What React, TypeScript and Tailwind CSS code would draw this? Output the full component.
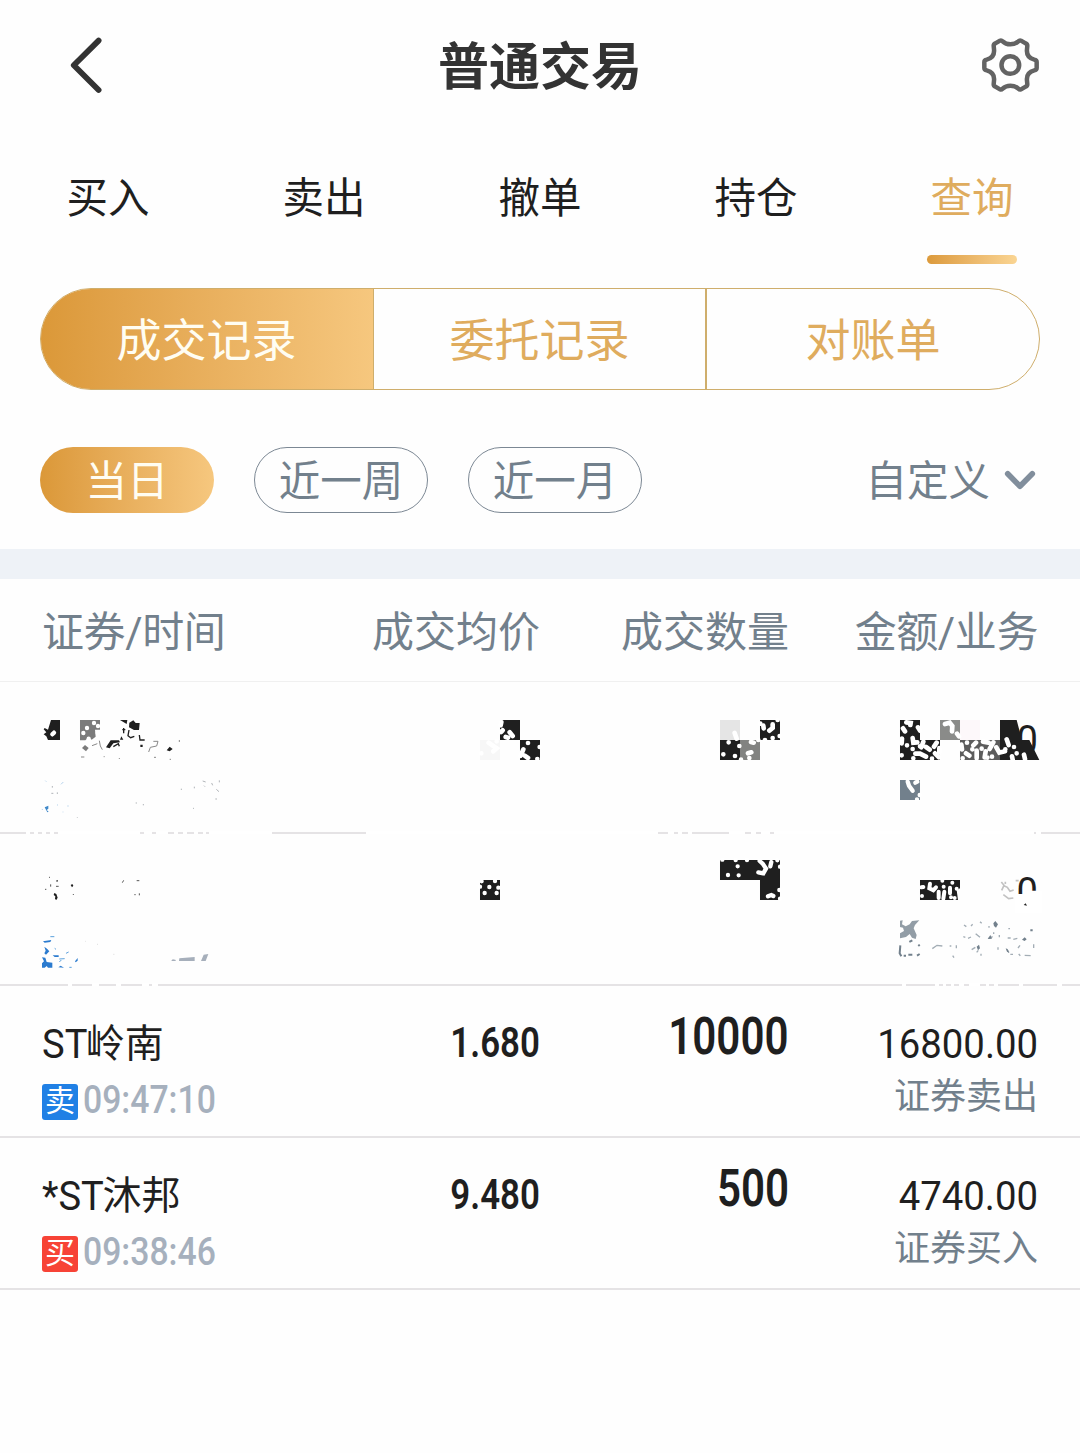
import { ReactNode } from 'react';

interface Trade {
  name: string;
  time: string;
  side: 'buy' | 'sell';
  price: string;
  amount: string;
  total: string;
  business: string;
}

const tabs = ['买入', '卖出', '撤单', '持仓', '查询'];
const segments = ['成交记录', '委托记录', '对账单'];
const ranges = ['当日', '近一周', '近一月'];
const columns = ['证券/时间', '成交均价', '成交数量', '金额/业务'];

const trades: Trade[] = [
  { name: 'ST岭南', time: '09:47:10', side: 'sell', price: '1.680', amount: '10000', total: '16800.00', business: '证券卖出' },
  { name: '*ST沐邦', time: '09:38:46', side: 'buy', price: '9.480', amount: '500', total: '4740.00', business: '证券买入' },
];

function BackIcon() {
  return (
    <svg className="w-9 h-15" viewBox="0 0 36 60" fill="none" stroke="#333333" strokeWidth="5.8" strokeLinecap="round" strokeLinejoin="round">
      <path d="M31.6 5.6L6.8 30.3L31.6 55" />
    </svg>
  );
}

function GearIcon() {
  return (
    <svg className="w-[60px] h-[60px]" viewBox="240 75 180 180" fill="none" stroke="#636363" strokeWidth="13.5" strokeLinejoin="round">
      <path d="M253 165V156Q253 150 260 149C276 145 284 136 282 118L281 107Q281 102 286 100L300 92Q304 90 308 94C320 106 342 106 355 94Q359 90 363 92L377 100Q382 102 382 107L381 118C379 136 387 145 403 149Q410 150 410 156V174Q410 180 403 181C387 185 379 194 381 212L382 223Q382 228 377 230L363 238Q359 240 355 236C342 224 320 224 308 236Q304 240 300 238L286 230Q281 228 281 223L282 212C284 194 276 185 260 181Q253 180 253 174Z" />
      <circle cx="331" cy="165" r="26.5" />
    </svg>
  );
}

function HiddenRow({ children, viewBox }: { children: ReactNode; viewBox: string }) {
  return (
    <div className="relative h-[152px] border-b-2 border-[#e5e3e5]">
      <div className="absolute right-[42px] top-[30px] h-[58px] flex items-center text-[41px] text-[#1f1f1f]">
        <span className="origin-right scale-x-[0.93]">0</span>
      </div>
      <svg className="absolute inset-x-0 top-0 w-[1080px] h-[152px]" viewBox={viewBox}>
        {children}
      </svg>
    </div>
  );
}

// 第一条记录（涂抹遮挡）
function HiddenFirst() {
  return (
    <HiddenRow viewBox="0 682 1080 152">
      {/* 名称 */}
      <g transform="translate(20 670) scale(0.33333)" fill="#1f1f1f">
        <path d="M93 150H120V210H84L79 199L71 193L79 187L71 178L74 174L84 179Z" />
        <path d="M180 150H240V179H225L227 200L215 209L206 202L196 211H180Z" fill="#7b7b7b" />
        <path d="M186 234L195 225L206 234L198 244Z" fill="#7b7b7b" />
        <path d="M300 150H322L320 162Z M328 158L340 151L347 159H359L357 180H342L327 172Z" />
        <path d="M300 209L304 199L310 209Z M272 211H297L300 217L280 220L269 235L258 232Z M361 224H368V231H361Z M440 241L449 230L458 237L449 244Z" />
        <path d="M327 180L324 197L332 203L343 199M358 195L360 210H374M311 174V190M307 179H316M280 230L295 221L298 229" fill="none" stroke="#1f1f1f" strokeWidth="4" />
        <path d="M216 227L232 221M238 212L241 228L247 239M386 246L391 232L410 228L414 214H400M183 261H193M251 260H254M402 262H408M449 268H453M298 264V267M478 210V216" fill="none" stroke="#888888" strokeWidth="3" />
        <path d="M222 159h0M201 174h0M190 189h0M206 206h0M234 168h0M233 189h0M97 193L102 188" fill="none" stroke="#ffffff" strokeWidth="13" strokeLinecap="round" />
        <path d="M74 412L85 407V416L80 420L86 425L82 427Z" fill="#3f88c9" />
        <path d="M76 332L79 335M123 343L130 336M67 420V417M128 426H130M111 405H114M144 406V410" fill="none" stroke="#8fbde2" strokeWidth="2" />
        <path d="M97 348V353M94 370H100M112 367V372M347 399H351M370 402V406M484 356V360M172 442V444M519 415H522M586 387H591M589 358L597 365M548 333L557 336M575 339L578 346M523 355V350M598 331V337M552 347L555 350" fill="none" stroke="#b0b4b8" strokeWidth="3" />
      </g>

      {/* 均价、数量 */}
      <g transform="translate(440 690) scale(0.33333)">
        <path d="M180 90H240V150H180Z M240 150H300V210H240Z M840 150H900V210H840Z M960 90H1020V150H960Z" fill="#1f1f1f" />
        <path d="M120 150H180V210H120Z" fill="#f7f7f7" />
        <path d="M840 90H900V150H840Z" fill="#e5e5e5" />
        <path d="M900 150H960V210H900Z" fill="#828381" />
        <path
          d="M184 96L182 106M188 121L183 126M209 127L218 138M197 141L204 143M264 159h0M250 178L245 190M241 198h0M254 197L264 204M292 207h0M299 171h0M146 158L154 164L170 175L160 184M124 190h0M170 154h0M884 129L890 146M866 157h0M850 193h0M885 198h0M898 168h0M933 156L941 158M924 190L934 187M928 204h0M903 209h0M955 150h0M970 107L971 115M998 103V114L988 122M961 101h0M1013 90h0M1019 138h0M998 144h0M975 150h0"
          fill="none"
          stroke="#ffffff"
          strokeWidth="14"
          strokeLinecap="round"
        />
      </g>

      {/* 金额 */}
      <g transform="translate(860 690) scale(0.33333)">
        <path d="M120 90H180V150H240V210H120Z M420 90H470L480 128V150H508L538 210H420Z" fill="#1f1f1f" />
        <path d="M240 90H300V150H240Z" fill="#8a8b89" />
        <path d="M300 90H360V150H300Z" fill="#fdf8fa" />
        <path d="M300 150H420V210H300Z" fill="#5c5c5c" />
        <path
          d="M139 97L152 99L151 105M129 115L135 124M174 112L180 122M158 144L160 158L172 157M126 146L125 160M141 166h0M158 177h0M125 196h0M180 169h0M190 155L184 172M198 171L209 179M166 191L180 191L198 200M160 205h0M222 170L230 158M225 190L237 202M216 206h0M238 174V188M255 102L269 98L277 108L276 124M291 131L297 139M304 164L306 178M321 158h0M318 190L328 197M337 178h0M348 158L340 166M350 182V205M369 155L386 158M365 176h0M377 184L374 202M389 177L400 157M396 200h0M409 172L418 188L435 184M440 148L446 165M436 178h0M462 171h0M470 190h0M456 199L458 209M492 194L495 207M308 205h0M382 203h0"
          fill="none"
          stroke="#ffffff"
          strokeWidth="14"
          strokeLinecap="round"
        />
        <path d="M120 270H180V330H120Z" fill="#72808c" />
        <path d="M143 275L147 287L158 302M166 278L172 275M179 315h0M171 328h0" fill="none" stroke="#ffffff" strokeWidth="13" strokeLinecap="round" />
      </g>

      {/* 分割线缺口 */}
      <path d="M26 833H30M34 833H38M42 833H46M50 833H54M58 833H140M144 833H152M156 833H168M174 833H178M183 833H187M194 833H198M203 833H206M209 833H272M366 833H658M668 833H674M678 833H682M688 833H692M729 833H745M751 833H756M761 833H770M774 833H1034M1036 833H1041" fill="none" stroke="#ffffff" strokeWidth="3" />
    </HiddenRow>
  );
}

// 第二条记录（涂抹遮挡）
function HiddenSecond() {
  return (
    <HiddenRow viewBox="0 834 1080 152">
      <g transform="translate(20 820) scale(0.33333)">
        <path d="M103 219L109 222L113 233L109 240L105 237L106 229L101 225Z M152 195L157 192L160 197L156 202Z" fill="#1f1f1f" />
        <path d="M87 172H90M92 193V200M108 183H114M108 199H116M112 180V184M307 188L311 181M350 182H358M343 224H347M358 220V226M75 208H79M160 222V225" fill="none" stroke="#555555" strokeWidth="3" />
        <path d="M69 364L94 360L91 366L74 368Z M73 380L81 386L88 394L78 404L73 400L77 392Z M66 412L76 413L80 426L97 428V443H84L80 438L74 443H66V430L72 424Z M98 406H116V411H104Z M115 442L122 437L132 443Z M165 424L173 414V422L167 427Z" fill="#2b7bcf" />
        <path d="M91 350H103M118 417L134 416M104 385L108 388M124 420L118 426M148 442H155M138 400L146 396" fill="none" stroke="#5aa0dc" strokeWidth="3" />
        <path d="M454 421L459 418L468 420L466 423H456Z M477 423L478 415L524 411V423Z M543 423L551 404L565 402L557 423Z" fill="#a6afbb" />
        <path d="M196 364H198M231 373H234M280 403H283" fill="none" stroke="#cccccc" strokeWidth="2" />
      </g>

      <g transform="translate(440 820) scale(0.33333)">
        <path d="M120 180H180V240H120Z M840 120H1020V240H960V180H840Z" fill="#1f1f1f" />
        <path
          d="M125 184h0M148 201h0M134 219h0M170 219h0M175 203h0M165 183h0M120 200h0M847 119h0M887 120h0M921 120h0M893 139h0M864 165h0M896 166h0M959 123L968 131L978 146L970 160L955 157M994 126L991 139M1012 121h0M1020 140h0M1018 210h0M984 229L994 225L1000 228M1020 236h0"
          fill="none"
          stroke="#ffffff"
          strokeWidth="13"
          strokeLinecap="round"
        />
      </g>

      <g transform="translate(860 820) scale(0.33333)">
        <path d="M465 222H500V212H545V280H465Z" fill="#ffffff" />
        <path d="M180 180H300V205L290 211L294 240H180Z" fill="#1f1f1f" />
        <path
          d="M184 202L190 201M210 191L208 205L220 211L228 202M186 228h0M236 215V234M251 200h0M253 215L250 236M277 188h0M270 203V220M290 206h0M284 234h0M247 182h0M273 232h0"
          fill="none"
          stroke="#ffffff"
          strokeWidth="12"
          strokeLinecap="round"
        />
        <path d="M424 186L432 196L425 211M436 185V192M432 197L442 202L450 214L461 210M467 182H476M430 224L446 236L460 234" fill="none" stroke="#c2c2c2" strokeWidth="5" />
        <path d="M491 255L497 250L501 257Z" fill="#1f1f1f" />
        <path d="M120 302L128 301L126 313L137 319L149 313L156 303L178 301L165 315L161 325L170 345L167 357L156 353L149 342L138 351L120 355V340L132 333L129 323L120 321Z" fill="#929da6" />
        <path d="M121 376L119 400L124 409M131 407H138M145 404H157M171 407L179 402M148 366L157 361M175 374L179 378" fill="none" stroke="#72808c" strokeWidth="6" />
        <path d="M217 386L231 376L247 378M269 378H274M289 376V385M278 407L282 413M312 315L319 320M310 350L316 352M324 355L333 351M347 341L360 352M333 318L338 313M360 305L365 310M387 318V323M335 389L346 382M350 397L355 391M363 401V407M386 355L398 350M401 342V337M418 352V345M414 382V389M445 326H450M443 354H452M460 358L472 355M440 387L447 398M451 403H459M476 402L481 407M494 406L512 407M521 373V384M474 384L480 376" fill="none" stroke="#a3adb5" strokeWidth="4" />
        <path d="M400 310L406 303L414 313L408 323L402 318Z M383 357L391 345L396 356Z M350 380L357 374L360 385L354 391Z M486 359L494 352L500 358L494 363Z M511 328H518V334H511Z M437 384L444 389L447 398L441 395Z" fill="#72808c" />
      </g>

      <path d="M68 985H72M92 985H99M116 985H121M142 985H149M152 985H158M902 985H906M935 985H939M943 985H946M951 985H954M959 985H964M969 985H980M986 985H989M994 985H998M1019 985H1023M1057 985H1062" fill="none" stroke="#ffffff" strokeWidth="3" />
    </HiddenRow>
  );
}

function TradeRow({ trade }: { trade: Trade }) {
  return (
    <div className="h-[152px] border-b-2 border-[#e5e3e5] pl-[42px] grid grid-cols-[249px_249px_249px_249px]">
      <div className="pt-7">
        <div className="h-[58px] flex items-center text-[#1f1f1f] whitespace-nowrap">
          <span className="pt-[3px] text-[41px] origin-left scale-x-[0.93]">{trade.name.slice(0, -2)}</span>
          <span className={trade.side === 'sell' ? 'pt-[3px] text-[39px] -ml-[5px]' : 'pt-[3px] text-[39px] -ml-[6px]'}>
            {trade.name.slice(-2)}
          </span>
        </div>
        <div className="h-[56px] flex items-center">
          <span
            className={`w-9 h-9 mt-1 rounded-[3px] flex items-center justify-center text-white text-[30px] leading-none pb-[2px] ${
              trade.side === 'sell' ? 'bg-[#2080e5]' : 'bg-[#f74336]'
            }`}
          >
            {trade.side === 'sell' ? '卖' : '买'}
          </span>
          <span className="ml-[5px] text-[39px] font-medium text-[#a6b0bd] origin-left scale-x-[0.865]">{trade.time}</span>
        </div>
      </div>
      <div className="h-[113px] flex items-center justify-end">
        <span className="text-[42px] font-semibold text-[#1f1f1f] origin-right scale-x-[0.83]">{trade.price}</span>
      </div>
      <div className="h-[102px] flex items-center justify-end">
        <span className="text-[52px] font-semibold text-[#1f1f1f] origin-right scale-x-[0.81]">{trade.amount}</span>
      </div>
      <div className="pt-[30px] flex flex-col items-end">
        <div className="h-[58px] flex items-center text-[41px] text-[#1f1f1f]">
          <span className="origin-right scale-x-[0.935]">{trade.total}</span>
        </div>
        <div className="-mt-[3px] h-[52px] flex items-center text-[36px] text-[#72808c]">{trade.business}</div>
      </div>
    </div>
  );
}

export default function App() {
  return (
    <div className="w-[1080px] min-h-[1453px] bg-[#fefefe] overflow-hidden font-['Roboto','Noto_Sans_CJK_SC',sans-serif]">
      {/* 顶部标题 */}
      <header className="h-[130px] pl-[67px] pr-10 flex items-center justify-between">
        <BackIcon />
        <h1 className="text-[51px] font-bold text-[#333333] leading-none -ml-[3px] pt-1">普通交易</h1>
        <GearIcon />
      </header>

      {/* 主导航 */}
      <nav className="grid grid-cols-5 h-[134px]">
        {tabs.map((tab) => {
          const active = tab === '查询';
          return (
            <div key={tab} className="flex flex-col items-center">
              <span className={`h-[125px] pt-[14px] flex items-center text-[41.5px] ${active ? 'text-[#dfac5e]' : 'text-[#1f1f1f]'}`}>{tab}</span>
              {active && <span className="w-[90px] h-[9px] rounded-full bg-linear-to-r from-[#dc9a3b] to-[#fad593]" />}
            </div>
          );
        })}
      </nav>

      {/* 记录类型 */}
      <div className="mt-6 mx-10 h-[102px] grid grid-cols-[332px_334px_332px] rounded-full border border-[#cfae6c] overflow-hidden">
        {segments.map((item, idx) => (
          <div
            key={item}
            className={`flex items-center justify-center pt-[6px] text-[45px] ${
              idx === 0
                ? '-my-px -ml-px bg-linear-to-r from-[#db9838] to-[#f6c77e] text-[#fffdf2]'
                : 'text-[#dfac5e] border-[#cfae6c]'
            } ${idx === 1 ? 'border-l border-r-2' : ''}`}
          >
            {item}
          </div>
        ))}
      </div>

      {/* 时间范围 */}
      <div className="mt-[57px] px-10 h-[66px] flex items-center gap-10 text-[41.5px] text-[#72808c]">
        {ranges.map((item, idx) => (
          <div
            key={item}
            className={`w-[174px] h-[66px] pt-1 rounded-full flex items-center justify-center ${
              idx === 0 ? 'bg-linear-to-r from-[#db9838] to-[#f6c77e] text-[#fffdf2]' : 'border border-[#7c8894]'
            }`}
          >
            {item}
          </div>
        ))}
        <div className="ml-auto mr-1 flex items-center gap-[14px]">
          <span className="pt-1">自定义</span>
          <svg className="w-8 h-5" viewBox="0 0 32 20" fill="none" stroke="#818e9c" strokeWidth="5.6" strokeLinecap="round" strokeLinejoin="round">
            <path d="M3.7 3.7L16 16.3L28.3 3.7" />
          </svg>
        </div>
      </div>

      <div className="mt-9 h-[30px] bg-[#eef2f7]" />

      {/* 表头 */}
      <div className="h-[103px] pt-1 border-b border-[#f0f0f0] pl-[42px] grid grid-cols-[249px_249px_249px_249px] items-center text-[42px] text-[#72808c]">
        {columns.map((col, idx) => (
          <span key={col} className={idx === 0 ? 'tracking-[-0.4px]' : idx === 3 ? 'text-right tracking-[-0.4px]' : 'text-right'}>
            {col}
          </span>
        ))}
      </div>

      <HiddenFirst />
      <HiddenSecond />
      {trades.map((trade) => (
        <TradeRow key={trade.time} trade={trade} />
      ))}
    </div>
  );
}
